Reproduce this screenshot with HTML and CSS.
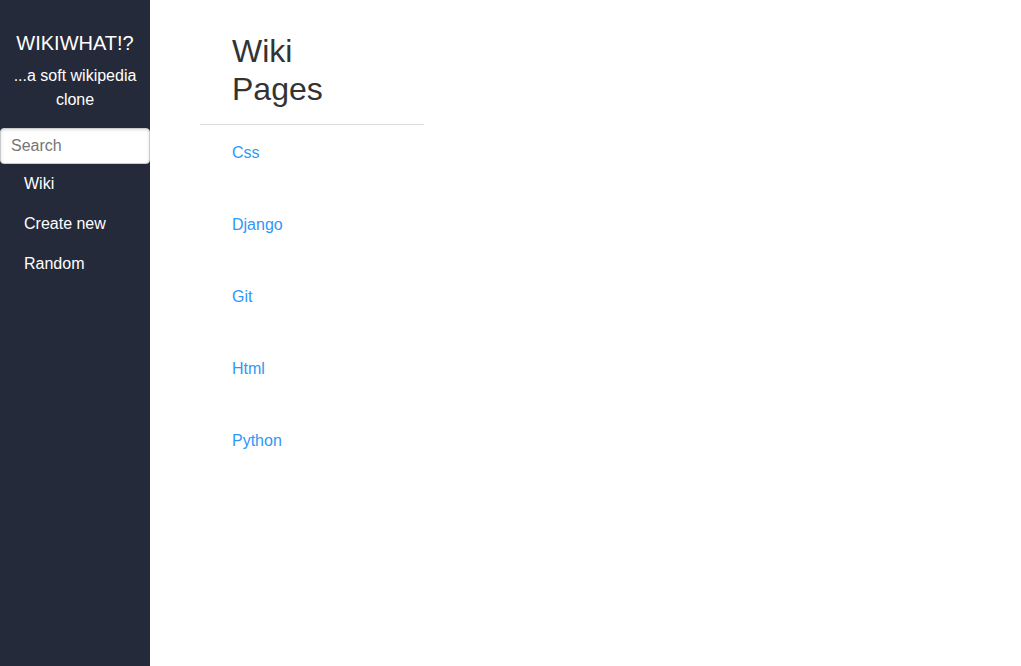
FILE: index.html
```html
<!DOCTYPE html>
<html lang="en">
<head>
<meta charset="utf-8">
<meta name="viewport" content="width=device-width, initial-scale=1">
<title>Wiki Pages</title>
<link rel="stylesheet" href="styles.css">
</head>
<body>
<div class="layout">
  <aside class="sidebar">
    <header class="brand">
      <h2 class="brand-name">WIKIWHAT!?</h2>
      <p class="brand-tagline">...a soft wikipedia clone</p>
    </header>
    <form class="search-form" role="search">
      <input class="search" type="search" name="q" placeholder="Search" aria-label="Search">
    </form>
    <nav class="menu">
      <a class="menu-link" href="#wiki">Wiki</a>
      <a class="menu-link" href="#new">Create new</a>
      <a class="menu-link" href="#random">Random</a>
    </nav>
  </aside>
  <main class="content">
    <h1 class="page-title">Wiki Pages</h1>
    <ul class="pages">
      <li class="page"><a class="page-link" href="#css">Css</a></li>
      <li class="page"><a class="page-link" href="#django">Django</a></li>
      <li class="page"><a class="page-link" href="#git">Git</a></li>
      <li class="page"><a class="page-link" href="#html">Html</a></li>
      <li class="page"><a class="page-link" href="#python">Python</a></li>
    </ul>
  </main>
</div>
</body>
</html>
```

FILE: styles.css
```css
* {
  box-sizing: border-box;
}

body {
  margin: 0;
  background: #fff;
  color: #333;
  font: 16px/24px "Liberation Sans", Arial, sans-serif;
}

.layout {
  display: flex;
  min-height: 100vh;
}

.sidebar {
  flex: 0 0 150px;
  background: #252a3a;
  color: #fff;
}

.brand {
  padding: 32px 8px 16px;
  text-align: center;
}

.brand-name {
  margin: 0 0 10px;
  font-size: 20px;
  font-weight: 400;
  line-height: 22px;
}

.brand-tagline {
  margin: 0;
}

.search-form {
  margin: 0;
}

.search {
  display: block;
  width: 100%;
  height: 36px;
  margin: 0;
  padding: 0 10px;
  border: 1px solid #ccc;
  border-radius: 4px;
  background: #fff;
  box-shadow: inset 0 1px 3px #ddd;
  color: #333;
  font: inherit;
  appearance: none;
}

.search::placeholder {
  color: #757575;
  opacity: 1;
}

.menu-link {
  display: block;
  padding: 8px 24px;
  color: #fff;
  text-decoration: none;
}

.content {
  flex: 1;
  padding: 16px 50px;
}

.page-title {
  max-width: 224px;
  margin: 0;
  padding: 16px 32px;
  border-bottom: 1px solid #dcdcdc;
  font-size: 32px;
  font-weight: 400;
  line-height: 38px;
}

.pages {
  margin: 0;
  padding: 0;
  list-style: none;
}

.page {
  padding: 16px 32px 32px;
}

.page-link {
  color: #2f97f7;
  text-decoration: none;
}
```
